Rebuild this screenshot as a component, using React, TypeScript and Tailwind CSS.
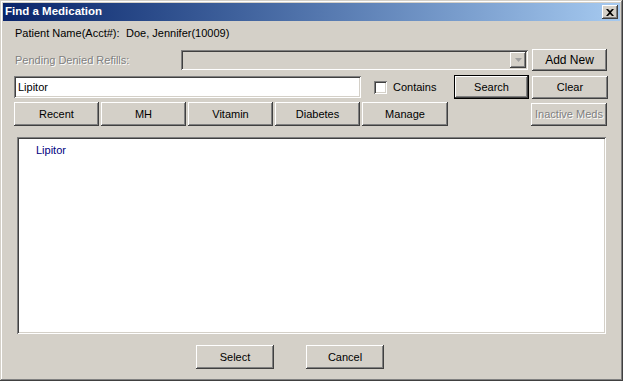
import React from "react";

const raised =
  "bg-[#d4d0c8] shadow-[inset_-1px_-1px_#404040,inset_1px_1px_#ffffff,inset_-2px_-2px_#808080,inset_2px_2px_#d4d0c8]";
const sunken =
  "bg-white shadow-[inset_1px_1px_#808080,inset_-1px_-1px_#ffffff,inset_2px_2px_#404040,inset_-2px_-2px_#d4d0c8]";

function Btn({
  children,
  className = "",
  disabled = false,
}: {
  children: React.ReactNode;
  className?: string;
  disabled?: boolean;
}) {
  return (
    <div
      className={`${raised} shrink-0 whitespace-nowrap flex items-center justify-center ${
        disabled ? "text-[#808080] [text-shadow:1px_1px_#ffffff]" : "text-black"
      } ${className}`}
    >
      {children}
    </div>
  );
}

export default function App() {
  return (
    <div
      className="w-[623px] h-[381px] bg-[#d4d0c8] flex flex-col p-[3px] shadow-[inset_-1px_-1px_#404040,inset_1px_1px_#d4d0c8,inset_-2px_-2px_#808080,inset_2px_2px_#ffffff]"
      style={{ fontFamily: '"Liberation Sans", Arial, sans-serif' }}
    >
      {/* Title bar */}
      <div className="h-[18px] shrink-0 flex items-center justify-between pl-[2px] pr-[2px] bg-gradient-to-r from-[#0a246a] to-[#a6caf0]">
        <span className="text-white font-bold text-[11.5px]">Find a Medication</span>
        <div className={`${raised} w-[16px] h-[14px] flex items-center justify-center`}>
          <svg width="8" height="7" viewBox="0 0 8 7">
            <path d="M0 0h2l2 2 2-2h2L5 3.5 8 7H6L4 5 2 7H0l3-3.5z" fill="#000" />
          </svg>
        </div>
      </div>

      <div className="flex flex-col pl-[11px] pr-[14px] text-[11px] whitespace-nowrap">
        {/* Patient */}
        <div className="flex items-center h-[22px] mt-[1px] text-black">
          <span className="ml-[1px] w-[111px] shrink-0">Patient Name(Acct#):</span>
          <span>Doe, Jennifer(10009)</span>
        </div>

        {/* Pending refills */}
        <div className="flex items-center mt-[5px] h-[22px]">
          <span className="ml-[1px] w-[166px] shrink-0 text-[#808080] [text-shadow:1px_1px_#ffffff]">
            Pending Denied Refills:
          </span>
          <div className="w-[347px] shrink-0 h-[20px] bg-[#d4d0c8] flex justify-end items-center pr-[2px] shadow-[inset_1px_1px_#808080,inset_-1px_-1px_#ffffff,inset_2px_2px_#404040,inset_-2px_-2px_#d4d0c8]">
            <div className={`${raised} w-[16px] h-[16px] flex items-center justify-center`}>
              <svg width="7" height="4" viewBox="0 0 7 4">
                <path d="M0 0h7L3.5 4z" fill="#a0a0a0" />
              </svg>
            </div>
          </div>
          <Btn className="ml-[4px] w-[75px] h-[22px] text-[12px]">Add New</Btn>
        </div>

        {/* Search row */}
        <div className="flex items-center mt-[4px] h-[24px]">
          <div className={`${sunken} shrink-0 w-[347px] h-[22px] flex items-center pl-[4px]`}>
            Lipitor
          </div>
          <div className={`${sunken} shrink-0 ml-[13px] w-[13px] h-[13px]`} />
          <span className="ml-[6px] w-[55px] shrink-0">Contains</span>
          <div className="ml-[6px] shrink-0 w-[75px] h-[24px] border border-black flex">
            <Btn className="flex-1">Search</Btn>
          </div>
          <Btn className="ml-[3px] w-[76px] h-[23px]">Clear</Btn>
        </div>

        {/* Category buttons */}
        <div className="flex items-center mt-[3px] h-[24px] gap-[2px]">
          <Btn className="w-[85px] h-[24px]">Recent</Btn>
          <Btn className="w-[85px] h-[24px]">MH</Btn>
          <Btn className="w-[85px] h-[24px]">Vitamin</Btn>
          <Btn className="w-[85px] h-[24px]">Diabetes</Btn>
          <Btn className="w-[86px] h-[24px]">Manage</Btn>
          <Btn disabled className="ml-[81px] w-[76px] h-[23px]">
            Inactive Meds
          </Btn>
        </div>

        {/* List */}
        <div className={`${sunken} shrink-0 ml-[3px] mt-[11px] w-[589px] h-[197px] pt-[5px] pl-[19px]`}>
          <span className="text-[#000080]">Lipitor</span>
        </div>

        {/* Bottom */}
        <div className="flex mt-[11px]">
          <Btn className="ml-[182px] w-[78px] h-[24px]">Select</Btn>
          <Btn className="ml-[32px] w-[78px] h-[24px]">Cancel</Btn>
        </div>
      </div>
    </div>
  );
}
